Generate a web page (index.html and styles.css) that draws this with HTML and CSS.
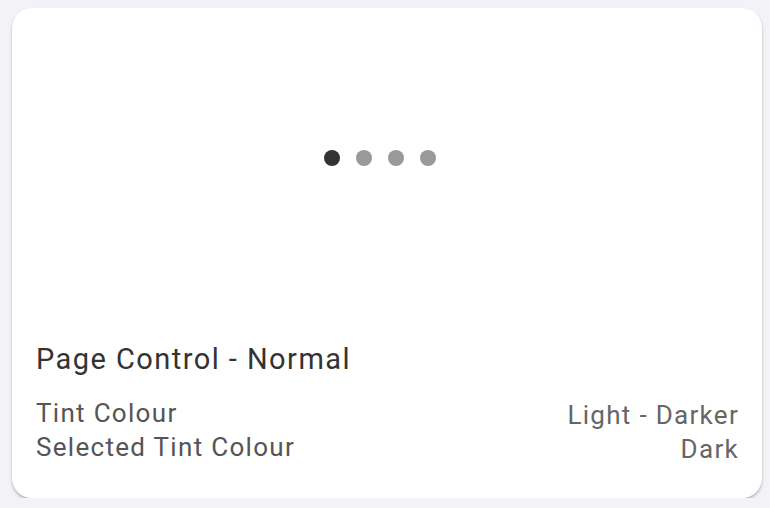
FILE: index.html
```html
<!DOCTYPE html>
<html>
<head>
<meta charset="utf-8">
<link rel="stylesheet" href="styles.css">
</head>
<body>
<div class="card">
  <div class="preview">
    <div class="dots">
      <span class="dot active"></span>
      <span class="dot"></span>
      <span class="dot"></span>
      <span class="dot"></span>
    </div>
  </div>
  <div class="title">Page Control - Normal</div>
  <div class="rows">
    <div class="labels">
      <div>Tint Colour</div>
      <div>Selected Tint Colour</div>
    </div>
    <div class="values">
      <div>Light - Darker</div>
      <div>Dark</div>
    </div>
  </div>
</div>
</body>
</html>
```

FILE: styles.css
```css
html, body {
  margin: 0;
  padding: 0;
  background: #f2f2f7;
}
body {
  padding: 8px 8px 0 12px;
  font-family: Roboto, "Liberation Sans", sans-serif;
}
.card {
  width: 750px;
  height: 490px;
  box-sizing: border-box;
  background: #fff;
  border-radius: 20px;
  box-shadow: 0 2px 3px rgba(0,0,0,0.25);
  padding: 0 24px 0 24px;
  display: flex;
  flex-direction: column;
}
.preview {
  height: 300px;
  display: flex;
  align-items: center;
  justify-content: center;
  padding-right: 14px;
}
.dots {
  display: flex;
  gap: 16px;
}
.dot {
  width: 16px;
  height: 16px;
  border-radius: 50%;
  background: #999;
}
.dot.active {
  background: #333;
}
.title {
  margin-top: 34px;
  font-size: 29px;
  line-height: 34px;
  letter-spacing: 0.05em;
  color: #333;
}
.rows {
  margin-top: 20px;
  display: flex;
  justify-content: space-between;
  font-size: 26px;
  line-height: 34px;
  letter-spacing: 0.05em;
}
.labels {
  color: #555;
}
.values {
  color: #666;
  text-align: right;
  padding-top: 2px;
  margin-right: -1px;
}
```
